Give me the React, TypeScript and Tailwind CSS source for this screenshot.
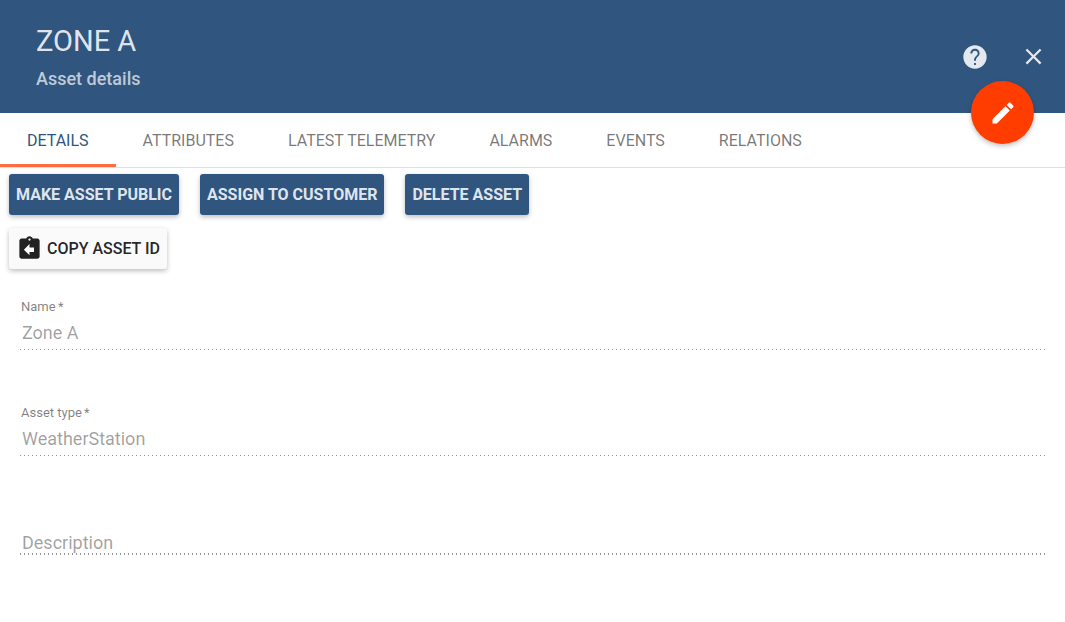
import { useState } from "react";

const tabs = ["Details", "Attributes", "Latest telemetry", "Alarms", "Events", "Relations"];
const actions = ["Make asset public", "Assign to customer", "Delete asset"];

const raised =
  "flex h-[41px] items-center rounded-[3px] px-[7px] text-[16px] uppercase whitespace-nowrap shadow-[0_2px_5px_0_rgba(0,0,0,0.26)]";

function Field({ id, label, value }: { id: string; label: string; value: string }) {
  return (
    <div className="flex flex-col">
      <label htmlFor={id} className="pl-px text-[13px] leading-5 text-black/50">
        {label} <span className="-ml-px">*</span>
      </label>
      <input
        id={id}
        defaultValue={value}
        disabled
        className="h-8 w-full bg-transparent pb-0.5 pl-0.5 text-[18px] text-black/38 outline-none"
      />
      <div className="h-px bg-[linear-gradient(to_right,rgba(0,0,0,0.42)_1px,transparent_1px)] bg-[length:4px_1px] bg-repeat-x" />
    </div>
  );
}

export default function App() {
  const [active, setActive] = useState(0);

  return (
    <div className="min-h-screen bg-white font-['Roboto',sans-serif] text-black/87">
      <header className="relative flex h-[113px] items-center justify-between bg-[#305680] pr-[18px] pl-9 text-white/87">
        <div>
          <h1 className="pt-0.5 text-[29px] leading-10 uppercase">Zone A</h1>
          <p className="mt-0.5 text-[18px] leading-8 font-medium text-white/70">Asset details</p>
        </div>
        <div className="flex items-center gap-[31px]">
          <button type="button" aria-label="Help">
            <svg viewBox="0 0 24 24" className="size-7 fill-current">
              <path d="M12 2C6.48 2 2 6.48 2 12s4.48 10 10 10 10-4.48 10-10S17.52 2 12 2zm.8 16.8h-1.6v-1.6h1.6v1.6zm2.1-7.6l-1 1C13.2 12.9 12.8 13.6 12.8 15.2h-1.6v-.5c0-1.2.45-2.2 1.17-2.95l1.4-1.4c.37-.36.6-.86.6-1.4 0-1.3-1.05-2.35-2.37-2.35S9.65 7.65 9.65 8.95H8.05C8.05 6.75 9.8 5 12 5s3.95 1.75 3.95 3.95c0 .88-.4 1.65-1.05 2.25z" />
            </svg>
          </button>
          <button type="button" aria-label="Close">
            <svg viewBox="0 0 24 24" className="size-[27px] fill-current">
              <path d="M19 6.41L17.59 5 12 10.59 6.41 5 5 6.41 10.59 12 5 17.59 6.41 19 12 13.41 17.59 19 19 17.59 13.41 12z" />
            </svg>
          </button>
        </div>
        <button
          type="button"
          aria-label="Edit"
          className="absolute right-[31px] -bottom-[31px] flex size-[63px] items-center justify-center rounded-full bg-[#ff3d00] text-white shadow-[0_2px_5px_0_rgba(0,0,0,0.26)]"
        >
          <svg viewBox="0 0 24 24" className="size-7 fill-current">
            <path d="M3 17.25V21h3.75L17.81 9.94l-3.75-3.75L3 17.25zM20.71 7.04c.39-.39.39-1.02 0-1.41l-2.34-2.34c-.39-.39-1.02-.39-1.41 0l-1.83 1.83 3.75 3.75 1.83-1.83z" />
          </svg>
        </button>
      </header>

      <nav role="tablist" className="flex h-[55px] border-b border-black/12">
        {tabs.map((tab, i) => (
          <button
            key={tab}
            type="button"
            role="tab"
            aria-selected={i === active}
            onClick={() => setActive(i)}
            className={`border-b-3 px-[27px] pt-[5px] text-[16px] uppercase ${
              i === active ? "border-[#ff6e40] text-[#305680]" : "border-transparent text-black/54"
            }`}
          >
            {tab}
          </button>
        ))}
      </nav>

      <main>
        <div className="flex flex-col items-start gap-[13px] px-[9px] pt-1.5">
          <div className="flex flex-wrap gap-x-[21px] gap-y-[13px]">
            {actions.map((action) => (
              <button key={action} type="button" className={`${raised} bg-[#305680] font-bold text-white/87`}>
                {action}
              </button>
            ))}
          </div>
          <button type="button" className={`${raised} gap-1 bg-[#fafafa] font-medium`}>
            <svg viewBox="0 0 24 24" className="size-[27px] fill-current">
              <path d="M19 3h-4.18C14.4 1.84 13.3 1 12 1c-1.3 0-2.4.84-2.82 2H5c-1.1 0-2 .9-2 2v14c0 1.1.9 2 2 2h14c1.1 0 2-.9 2-2V5c0-1.1-.9-2-2-2zm-7 0c.55 0 1 .45 1 1s-.45 1-1 1-1-.45-1-1 .45-1 1-1zm4 12h-4v3l-5-5 5-5v3h4v4z" />
            </svg>
            Copy asset ID
          </button>
        </div>

        <form className="flex flex-col gap-[53px] px-5 pt-7">
          <Field id="name" label="Name" value="Zone A" />
          <Field id="type" label="Asset type" value="WeatherStation" />
          <div className="pt-[19px]">
            <textarea
              aria-label="Description"
              placeholder="Description"
              disabled
              rows={1}
              className="block h-[27px] w-full resize-none overflow-hidden bg-[linear-gradient(to_right,rgba(0,0,0,0.42)_1px,transparent_1px)] bg-[length:4px_2px] bg-bottom-left bg-repeat-x pl-0.5 text-[18px] leading-[30px] outline-none placeholder:text-black/38"
            />
          </div>
        </form>
      </main>
    </div>
  );
}
